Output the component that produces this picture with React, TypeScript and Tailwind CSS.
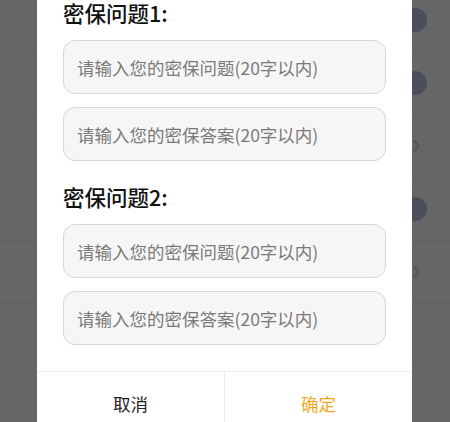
const rows: ("dot" | "arrow" | null)[] = ["dot", "dot", "arrow", "dot", "arrow", null, null];

const Chevron = () => (
  <svg width="10" height="14" viewBox="0 0 10 14" fill="none">
    <path d="M2 1l6 6-6 6" stroke="#bdbdbd" strokeWidth="1.3" />
  </svg>
);

const Field = ({ placeholder }: { placeholder: string }) => (
  <input
    placeholder={placeholder}
    className="h-[54px] w-full rounded-[12px] border border-[#d6d6d6] bg-[#f6f6f6] px-[13px] text-[17.5px] text-[#333] outline-none placeholder:text-[#7a7a7a]"
  />
);

const App = () => {
  return (
    <div
      className="relative h-[422px] w-[450px] overflow-hidden bg-white"
      style={{ fontFamily: '"Noto Sans CJK SC", "Noto Sans", sans-serif' }}
    >
      {/* page behind the dialog */}
      <div className="-mt-[11px]">
        {rows.map((r, i) => (
          <div
            key={i}
            className="flex h-[63px] items-center justify-end border-b border-[#f0f0f0]"
          >
            {r === "dot" && <div className="mr-[23px] h-[24px] w-[24px] rounded-full bg-[#b9c1e1]" />}
            {r === "arrow" && (
              <div className="mr-[29px]">
                <Chevron />
              </div>
            )}
          </div>
        ))}
      </div>

      {/* mask */}
      <div className="absolute inset-0 bg-black/60" />

      {/* dialog */}
      <div className="absolute left-[37px] top-[-18px] w-[375px] bg-white">
        <div className="px-[26px] pb-[26px] pt-[18px]">
          <div className="h-[26px] text-[21.5px] font-medium leading-[26px] text-[#111]">密保问题1:</div>
          <div className="mt-[14px] flex flex-col gap-[13px]">
            <Field placeholder="请输入您的密保问题(20字以内)" />
            <Field placeholder="请输入您的密保答案(20字以内)" />
          </div>
          <div className="mt-[23px] h-[26px] text-[21.5px] font-medium leading-[26px] text-[#111]">密保问题2:</div>
          <div className="mt-[14px] flex flex-col gap-[13px]">
            <Field placeholder="请输入您的密保问题(20字以内)" />
            <Field placeholder="请输入您的密保答案(20字以内)" />
          </div>
        </div>
        <div className="flex h-[66px] border-t border-[#ececec]">
          <button className="flex-1 border-r border-[#ececec] text-[17.5px] text-[#222]">取消</button>
          <button className="flex-1 text-[17.5px] text-[#f5a623]">确定</button>
        </div>
      </div>
    </div>
  );
};

export default App;
